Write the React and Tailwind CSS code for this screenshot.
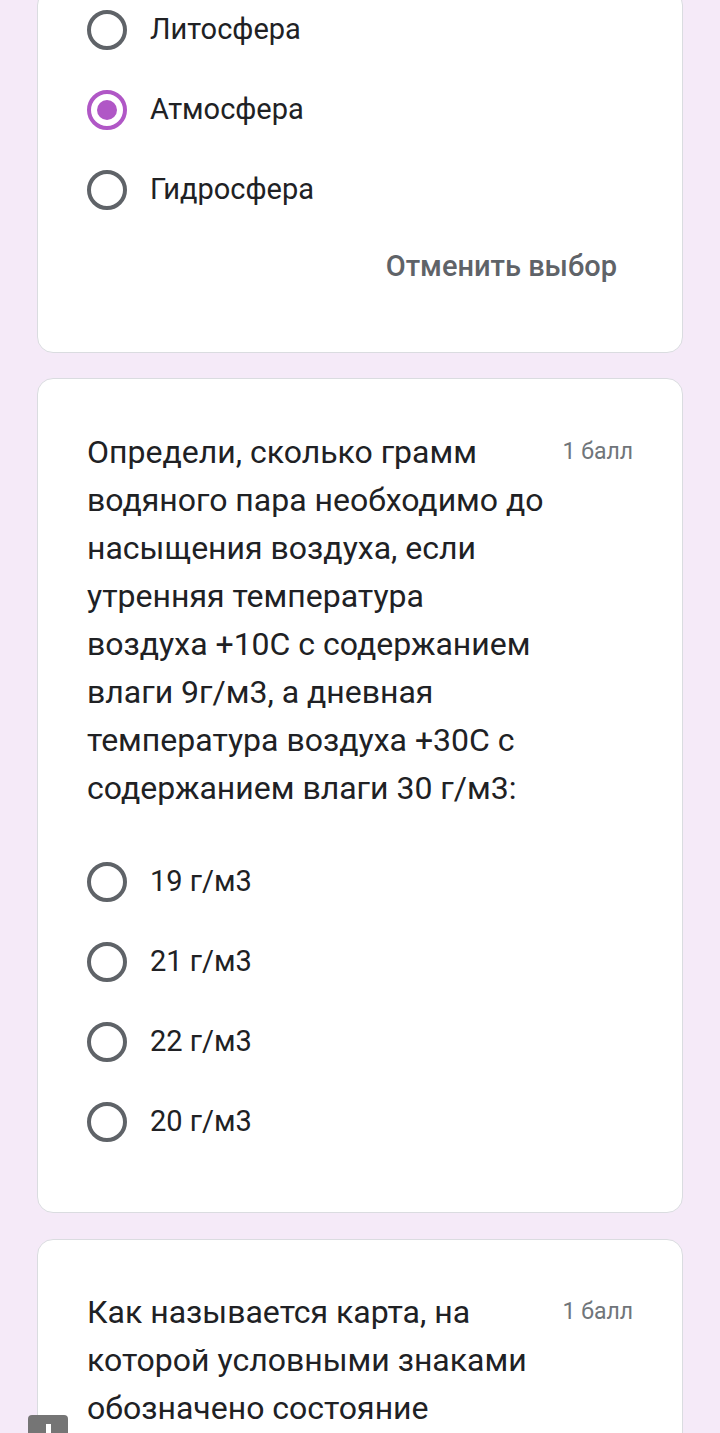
import React from 'react';

const Radio = ({ checked }) => (
  <div
    className={`w-[40px] h-[40px] rounded-full border-[4px] flex items-center justify-center flex-shrink-0 ${checked ? 'border-[#b057c6]' : 'border-[#5f6368]'}`}
  >
    {checked && <div className="w-[20px] h-[20px] rounded-full bg-[#b057c6]"></div>}
  </div>
);

const Option = ({ label, checked }) => (
  <div className="h-[80px] flex items-center gap-[23px]">
    <Radio checked={checked} />
    <span className="text-[29px] text-[#202124]">{label}</span>
  </div>
);

const Question = ({ text }) => (
  <div className="flex items-start">
    <p className="w-[459px] text-[32px] leading-[48px] text-[#202124]">{text}</p>
    <span className="ml-auto flex-shrink-0 whitespace-nowrap text-[23px] leading-[48px] text-[#70757a]">1 балл</span>
  </div>
);

export default function App() {
  return (
    <div
      className="relative h-[1433px] overflow-hidden bg-[#f5eaf8] px-[37px]"
      style={{ fontFamily: 'Roboto, "Noto Sans", sans-serif' }}
    >
      <div className="-mt-[11px] bg-white border border-[#dadce0] rounded-[16px] px-[49px] pb-[71px]">
        <Option label="Литосфера" />
        <Option label="Атмосфера" checked />
        <Option label="Гидросфера" />
        <div className="flex justify-end pr-[16px] pt-[21px]">
          <span className="text-[29px] font-medium leading-[30px] text-[#5f6368]">Отменить выбор</span>
        </div>
      </div>

      <div className="mt-[25px] bg-white border border-[#dadce0] rounded-[16px] px-[49px] pt-[49px] pb-[50px]">
        <Question text="Определи, сколько грамм водяного пара необходимо до насыщения воздуха, если утренняя температура воздуха +10С с содержанием влаги 9г/м3, а дневная температура воздуха +30С с содержанием влаги 30 г/м3:" />
        <div className="mt-[30px]">
          <Option label="19 г/м3" />
          <Option label="21 г/м3" />
          <Option label="22 г/м3" />
          <Option label="20 г/м3" />
        </div>
      </div>

      <div className="mt-[26px] bg-white border border-[#dadce0] rounded-[16px] px-[49px] pt-[48px] pb-[49px]">
        <Question text="Как называется карта, на которой условными знаками обозначено состояние погоды на определённый момент времени?" />
      </div>

      <div className="absolute left-[28px] bottom-0 w-[40px] h-[18px] rounded-t-[4px] bg-[#757575] flex justify-center items-end">
        <div className="w-[5px] h-[9px] bg-white"></div>
      </div>
    </div>
  );
}
